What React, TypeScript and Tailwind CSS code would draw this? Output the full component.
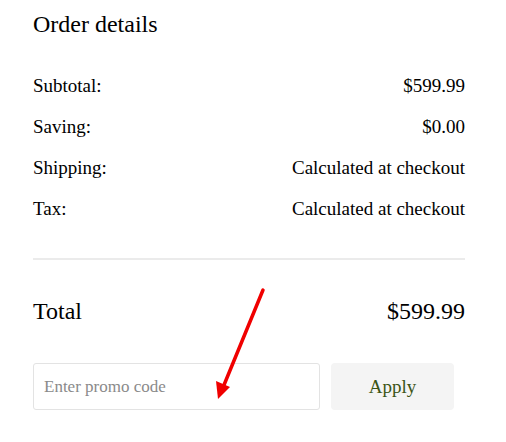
export default function App() {
  const rows = [
    { label: "Subtotal:", value: "$599.99" },
    { label: "Saving:", value: "$0.00" },
    { label: "Shipping:", value: "Calculated at checkout" },
    { label: "Tax:", value: "Calculated at checkout" },
  ];

  return (
    <div className="relative w-[506px] h-[442px] bg-white text-black font-['Liberation_Serif','Times_New_Roman',serif]">
      <div className="w-[432px] ml-[33px] pt-[8px]">
        <h2 className="text-[24px] leading-[32px] font-normal">Order details</h2>

        <div className="mt-[26px] flex flex-col">
          {rows.map((r) => (
            <div
              key={r.label}
              className="flex justify-between items-center h-[41px] text-[19px]"
            >
              <span>{r.label}</span>
              <span>{r.value}</span>
            </div>
          ))}
        </div>

        <div className="mt-[28px] h-[2px] bg-[#ebebeb]" />

        <div className="mt-[35px] flex justify-between items-center h-[32px] text-[24px]">
          <span>Total</span>
          <span>$599.99</span>
        </div>

        <div className="mt-[36px] flex gap-[11px]">
          <input
            type="text"
            placeholder="Enter promo code"
            className="w-[287px] h-[47px] px-[10px] border border-[#e3e3e3] rounded-[3px] text-[17px] placeholder:text-[#8a8a8a] outline-none font-['Liberation_Serif','Times_New_Roman',serif]"
          />
          <button className="w-[123px] h-[47px] bg-[#f4f4f4] rounded-[4px] text-[19px] text-[#3b5416] pt-[2px] font-['Liberation_Serif','Times_New_Roman',serif]">
            Apply
          </button>
        </div>
      </div>

      <svg
        className="absolute left-0 top-0 pointer-events-none"
        width="506"
        height="442"
        viewBox="0 0 506 442"
      >
        <line
          x1="263"
          y1="290"
          x2="224"
          y2="385"
          stroke="#f00000"
          strokeWidth="3.5"
          strokeLinecap="round"
        />
        <polygon points="218,399 216,381 230,387" fill="#f00000" />
      </svg>
    </div>
  );
}
